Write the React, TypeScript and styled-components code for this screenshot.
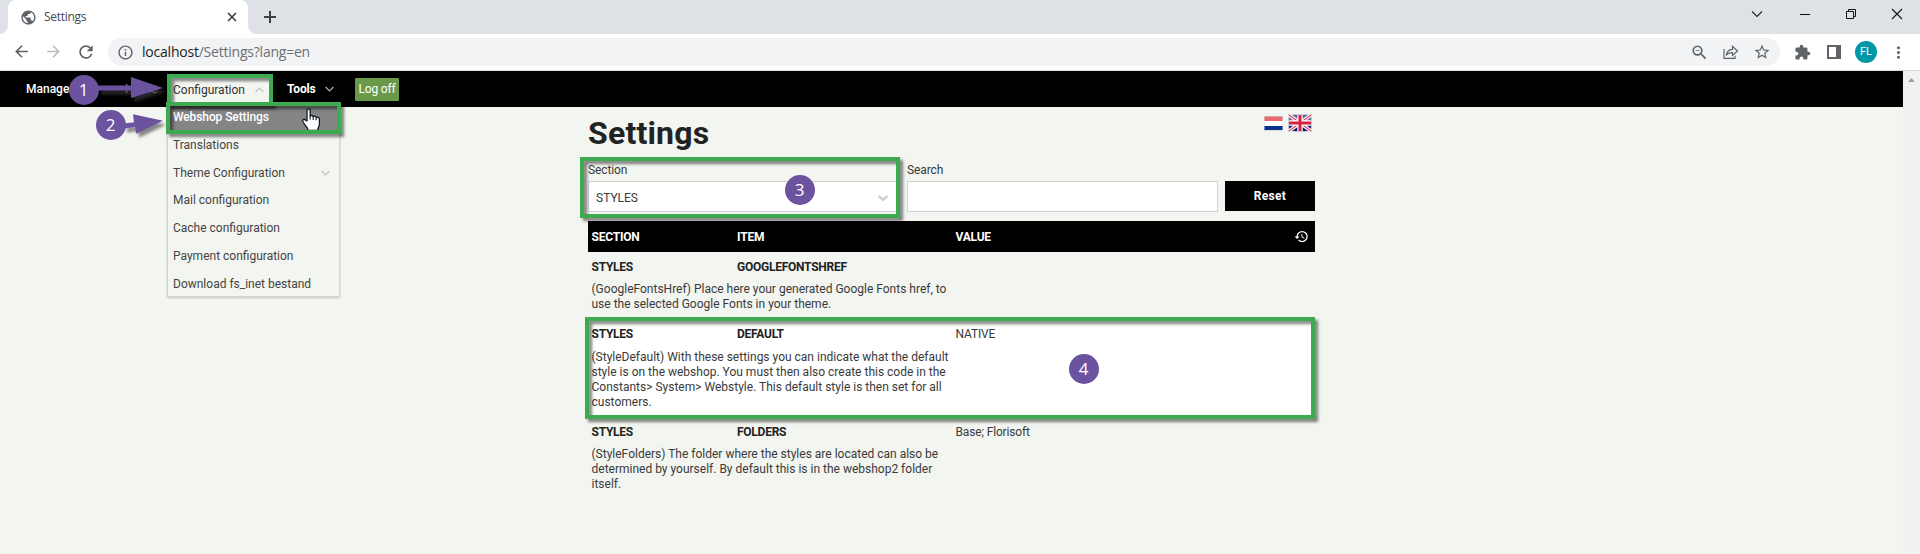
import React from 'react';
import styled, { createGlobalStyle } from 'styled-components';
import {
  MdArrowBack, MdArrowForward, MdRefresh, MdInfoOutline, MdOutlineZoomOut,
  MdStarBorder, MdExtension, MdMoreVert, MdPublic, MdHistory,
} from 'react-icons/md';

const Global = createGlobalStyle`
  * { box-sizing: border-box; }
  body { margin: 0; background: #f3f5f0; overflow: hidden; }
  svg { display: block; flex: none; }
`;

const Window = styled.div`
  position: relative;
  width: 1920px;
  height: 554px;
  display: flex;
  flex-direction: column;
  overflow: hidden;
  font-family: Roboto, 'Liberation Sans', sans-serif;
  font-size: 12px;
  color: #3a3a3a;
`;

/* ---------- browser chrome ---------- */
const TabStrip = styled.div`
  height: 34px;
  flex: none;
  display: flex;
  background: #dee1e6;
`;
const TabEdge = styled.div<{ $side: 'left' | 'right' }>`
  width: 8px;
  height: 34px;
  background: radial-gradient(circle at ${p => (p.$side === 'left' ? '0' : '8px')} 26px, #dee1e6 7.5px, #fff 8px);
  clip-path: inset(26px 0 0 0);
`;
const Tab = styled.div`
  width: 240px;
  display: flex;
  align-items: center;
  padding: 0 10px 0 12px;
  background: #fff;
  border-radius: 8px 8px 0 0;
  color: #5f6368;
`;
const TabTitle = styled.span`
  flex: 1;
  margin-left: 7px;
  padding-bottom: 1px;
  font-family: 'Open Sans', sans-serif;
  font-size: 12px;
  letter-spacing: -0.3px;
  color: #45494d;
`;
const NewTab = styled.div`
  padding: 11px 0 0 8px;
`;
const WindowButtons = styled.div`
  margin-left: auto;
  display: flex;
  align-items: center;
  gap: 30px;
  padding: 0 15px 6px 0;
`;
const Toolbar = styled.div`
  height: 37px;
  flex: none;
  display: flex;
  align-items: center;
  padding-left: 12px;
  background: #fff;
  border-bottom: 1px solid #d9dcda;
  color: #5f6368;
`;
const NavButtons = styled.div`
  display: flex;
  gap: 13px;
  width: 96px;
`;
const AddressBar = styled.div`
  width: 1672px;
  height: 28px;
  display: flex;
  align-items: center;
  padding: 0 9px 0 9px;
  border-radius: 14px;
  background: #f1f3f4;
`;
const Url = styled.span`
  flex: 1;
  margin-left: 8px;
  font-family: 'Open Sans', sans-serif;
  font-size: 14px;
  letter-spacing: -0.22px;
  line-height: 20px;
  color: #6b6f74;
`;
const Host = styled.span`
  color: #202124;
`;
const AddressIcons = styled.div`
  display: flex;
  align-items: center;
  gap: 14px;
`;
const Extensions = styled.div`
  display: flex;
  align-items: center;
  margin-left: 14px;
`;
const SidePanelIcon = styled.div`
  width: 14px;
  height: 14px;
  margin: 0 14px 0 16px;
  border: 2px solid #5f6368;
  border-right-width: 5px;
`;
const Avatar = styled.div`
  width: 22px;
  height: 22px;
  border-radius: 50%;
  background: #0097a7;
  color: #fff;
  font-size: 11px;
  line-height: 22px;
  text-align: center;
  margin-right: 12px;
`;

/* ---------- page ---------- */
const Viewport = styled.div`
  flex: 1;
  display: flex;
  min-height: 0;
`;
const Page = styled.div`
  width: 1903px;
`;
const ScrollTrack = styled.div`
  width: 17px;
  background: #f1f1f1;
  padding: 7px 0 0 5px;
`;
const NavBar = styled.nav`
  height: 36px;
  display: flex;
  align-items: center;
  padding-left: 26px;
  background: #000;
  color: #fff;
`;
const NavLink = styled.div<{ $w: number; $dim?: boolean }>`
  width: ${p => p.$w}px;
  font-weight: ${p => (p.$dim ? 400 : 500)};
  color: ${p => (p.$dim ? '#999' : '#fff')};
`;
const OpenMenu = styled.div`
  position: relative;
  align-self: flex-end;
  width: 106px;
  height: 33px;
  display: flex;
  align-items: center;
  justify-content: space-between;
  padding: 0 9px 2px 6px;
  background: #f3f5f0;
  color: #333;
`;
const ToolsMenu = styled.div`
  width: 82px;
  display: flex;
  align-items: center;
  gap: 9px;
  padding-left: 14px;
  font-weight: 700;
  letter-spacing: -0.15px;
`;
const LogOff = styled.button`
  width: 44px;
  height: 23px;
  padding: 0;
  border: 0;
  border-radius: 1px;
  background: #6a994a;
  color: #fff;
  font: 12px Roboto, sans-serif;
  letter-spacing: -0.2px;
`;
const Dropdown = styled.div`
  position: absolute;
  left: 0;
  top: 31px;
  width: 173px;
  height: 192px;
  background: #f3f5f0;
  border: 1px solid #d2d4d0;
  border-top: 0;
  box-shadow: 0 1px 2px rgba(0, 0, 0, 0.2);
`;
const MenuItem = styled.div<{ $active?: boolean }>`
  height: ${p => (p.$active ? 26 : 27.8)}px;
  display: flex;
  align-items: center;
  justify-content: space-between;
  padding: 0 9px ${p => (p.$active ? 3 : 0)}px 5px;
  color: ${p => (p.$active ? '#fff' : '#444')};
  background: ${p => (p.$active ? '#858585' : 'transparent')};
  font-weight: ${p => (p.$active ? 500 : 400)};
  letter-spacing: ${p => (p.$active ? -0.1 : 0)}px;
`;

const Content = styled.main`
  width: 727px;
  margin-left: 588px;
`;
const TitleRow = styled.div`
  height: 56px;
  display: flex;
  justify-content: space-between;
`;
const Title = styled.h1`
  margin: 8px 0 0;
  font-size: 32px;
  line-height: 37px;
  letter-spacing: 0.2px;
  color: #222;
`;
const Flags = styled.div`
  height: 32px;
  display: flex;
  align-items: center;
  gap: 5px;
  padding-right: 3px;
`;
const Filters = styled.div`
  display: flex;
  align-items: flex-end;
  height: 49px;
`;
const Field = styled.label<{ $w: number; $gap: number }>`
  width: ${p => p.$w}px;
  margin-right: ${p => p.$gap}px;
`;
const Label = styled.span`
  display: block;
  line-height: 15px;
  height: 18px;
  letter-spacing: -0.1px;
`;
const Box = styled.div`
  height: 31px;
  display: flex;
  align-items: center;
  justify-content: space-between;
  padding: 2px 11px 0 7px;
  background: #fff;
  border: 1px solid #d0d0d0;
`;
const Reset = styled.button`
  width: 90px;
  height: 30px;
  margin-bottom: 1px;
  border: 0;
  background: #000;
  color: #fff;
  font: 700 12px Roboto, sans-serif;
  letter-spacing: 0.3px;
`;
const Table = styled.div`
  margin-top: 9px;
`;
const HeadRow = styled.div`
  height: 31px;
  display: grid;
  grid-template-columns: 145.5px 218.5px 1fr auto;
  align-items: center;
  padding: 0 6px 0 3.5px;
  background: #000;
  color: #fff;
  font-weight: 700;
  letter-spacing: -0.2px;
`;
const Row = styled.div<{ $highlight?: boolean }>`
  display: grid;
  grid-template-columns: 145.5px 218.5px 1fr;
  row-gap: ${p => (p.$highlight ? 8 : 7)}px;
  padding: 8px 0 7px 3.5px;
  line-height: 15px;
  background: ${p => (p.$highlight ? '#fff' : 'transparent')};
`;
const Key = styled.div`
  font-weight: 700;
  color: #222;
  letter-spacing: -0.25px;
`;
const Value = styled.div`
  letter-spacing: -0.15px;
`;
const Description = styled.div`
  grid-column: 1 / 3;
  white-space: pre-line;
`;

/* ---------- callouts drawn over the page ---------- */
const Frame = styled.div<{ $x: number; $y: number; $w: number; $h: number }>`
  position: absolute;
  left: ${p => p.$x}px;
  top: ${p => p.$y}px;
  width: ${p => p.$w}px;
  height: ${p => p.$h}px;
  border: 4px solid #3cab50;
  filter: drop-shadow(3px 3px 1.5px rgba(0, 0, 0, 0.5));
`;
const Badge = styled.div<{ $x: number; $y: number }>`
  position: absolute;
  left: ${p => p.$x - 15}px;
  top: ${p => p.$y - 15}px;
  width: 30px;
  height: 30px;
  border-radius: 50%;
  background: #6c539f;
  color: #fff;
  font: 17px/29px 'Open Sans', sans-serif;
  text-align: center;
`;
const Arrows = styled.svg`
  position: absolute;
  left: 90px;
  top: 70px;
  filter: drop-shadow(3px 4px 1.5px rgba(60, 60, 60, 0.6));
`;
const Pointer = styled.svg`
  position: absolute;
  left: 301px;
  top: 108px;
`;

const Chevron = ({ up, c = '#aaa', w = 1.3, s = 9 }: { up?: boolean; c?: string; w?: number; s?: number }) => (
  <svg width={s} height={6} viewBox="0 0 9 6" fill="none" stroke={c} strokeWidth={w} preserveAspectRatio="none">
    <path d={up ? 'M.6 5 4.5 1.1 8.4 5' : 'M.6 1 4.5 4.9 8.4 1'} />
  </svg>
);

const DutchFlag = () => (
  <svg width="19" height="15" viewBox="0 0 19 15">
    <rect width="19" height="15" fill="#d9dbe0" />
    <path fill="#e76a70" d="M.5.5h18v4.5H.5z" />
    <path fill="#fff" d="M.5 5h18v5H.5z" />
    <path fill="#08308c" d="M.5 10h18v4H.5z" />
  </svg>
);
const BritishFlag = () => (
  <svg width="24" height="18" viewBox="0 0 24 18">
    <rect width="24" height="18" fill="#c9cad6" />
    <path fill="#5c609f" d="M1 1h22v8H1z" />
    <path fill="#0b1672" d="M1 9h22v8H1z" />
    <path stroke="#fff" strokeWidth="3.6" d="m1 1 22 16M23 1 1 17" />
    <path stroke="#e0435a" strokeWidth="1.3" d="m1 1 22 16M23 1 1 17" />
    <path stroke="#fff" strokeWidth="5.4" d="M12 1v16M1 9h22" />
    <path stroke="#d4213d" strokeWidth="3" d="M12 1v16M1 9h22" />
  </svg>
);

const menu = ['Translations', 'Theme Configuration', 'Mail configuration', 'Cache configuration', 'Payment configuration', 'Download fs_inet bestand'];

const rows = [
  { item: 'GOOGLEFONTSHREF', value: '', text: '(GoogleFontsHref) Place here your generated Google Fonts href, to\nuse the selected Google Fonts in your theme.' },
  { item: 'DEFAULT', value: 'NATIVE', highlight: true, text: '(StyleDefault) With these settings you can indicate what the default\nstyle is on the webshop. You must then also create this code in the\nConstants> System> Webstyle. This default style is then set for all\ncustomers.' },
  { item: 'FOLDERS', value: 'Base; Florisoft', text: '(StyleFolders) The folder where the styles are located can also be\ndetermined by yourself. By default this is in the webshop2 folder\nitself.' },
];

export default function App() {
  return (
    <Window>
      <Global />
      <TabStrip>
        <TabEdge $side="left" />
        <Tab>
          <MdPublic size={17} />
          <TabTitle>Settings</TabTitle>
          <svg width="12" height="12" viewBox="0 0 12 12" stroke="#3c4043" strokeWidth="1.7"><path d="m2 2 8 8M10 2l-8 8" /></svg>
        </Tab>
        <TabEdge $side="right" />
        <NewTab>
          <svg width="12" height="12" viewBox="0 0 12 12" stroke="#3c4043" strokeWidth="2"><path d="M6 0v12M0 6h12" /></svg>
        </NewTab>
        <WindowButtons>
          <svg width="12" height="12" viewBox="0 0 12 12" fill="none" stroke="#222" strokeWidth="1.1"><path d="m1 3.5 5 5 5-5" /></svg>
          <svg width="20" height="12" viewBox="0 0 20 12" stroke="#111"><path d="M7 6.500h10" /></svg>
          <svg width="16" height="12" viewBox="0 0 16 12" fill="none" stroke="#111"><path d="M3.500 3.500h7v7h-7zM5.500 3.500v-2h7v7h-2" /></svg>
          <svg width="16" height="12" viewBox="0 0 16 12" stroke="#111" strokeWidth="1.1"><path d="m3 1 10 10M13 1 3 11" /></svg>
        </WindowButtons>
      </TabStrip>

      <Toolbar>
        <NavButtons>
          <MdArrowBack size={19} />
          <MdArrowForward size={19} color="#b9bbbd" />
          <MdRefresh size={20} />
        </NavButtons>
        <AddressBar>
          <MdInfoOutline size={17} />
          <Url><Host>localhost</Host>/Settings?lang=en</Url>
          <AddressIcons>
            <MdOutlineZoomOut size={19} />
            <svg width="16" height="14" viewBox="0 0 16 14" fill="none" stroke="#5f6368" strokeWidth="1.2">
              <path d="M1 4v9.300h11v-2.500M3.500 9.800c.3-3.500 2.500-5.300 6-5.500V1.300l5 4.700-5 4.500V7.600c-2.500 0-4.500.6-6 2.200z" />
            </svg>
            <MdStarBorder size={18} />
          </AddressIcons>
        </AddressBar>
        <Extensions>
          <MdExtension size={17} />
          <SidePanelIcon />
          <Avatar>FL</Avatar>
          <MdMoreVert size={19} />
        </Extensions>
      </Toolbar>

      <Viewport>
        <Page>
          <NavBar>
            <NavLink $w={99}>Manage</NavLink>
            <NavLink $w={42} $dim>Home</NavLink>
            <OpenMenu>
              Configuration
              <Chevron up c="#c3c5c1" />
              <Dropdown>
                <MenuItem $active>Webshop Settings</MenuItem>
                {menu.map(m => (
                  <MenuItem key={m}>{m}{m.startsWith('Theme') && <Chevron c="#c3c5c1" />}</MenuItem>
                ))}
              </Dropdown>
            </OpenMenu>
            <ToolsMenu>Tools<Chevron /></ToolsMenu>
            <LogOff>Log off</LogOff>
          </NavBar>

          <Content>
            <TitleRow>
              <Title>Settings</Title>
              <Flags><DutchFlag /><BritishFlag /></Flags>
            </TitleRow>
            <Filters>
              <Field $w={312} $gap={7}>
                <Label>Section</Label>
                <Box>STYLES<Chevron c="#ccc" w={2.2} s={10} /></Box>
              </Field>
              <Field $w={311} $gap={7}>
                <Label>Search</Label>
                <Box />
              </Field>
              <Reset>Reset</Reset>
            </Filters>
            <Table>
              <HeadRow>
                <span>SECTION</span><span>ITEM</span><span>VALUE</span><MdHistory size={15} />
              </HeadRow>
              {rows.map(r => (
                <Row key={r.item} $highlight={r.highlight}>
                  <Key>STYLES</Key><Key>{r.item}</Key><Value>{r.value}</Value>
                  <Description>{r.text}</Description>
                </Row>
              ))}
            </Table>
          </Content>
        </Page>
        <ScrollTrack>
          <svg width="7" height="4" viewBox="0 0 7 4" fill="#a0a0a0"><path d="M3.500 0 7 4H0z" /></svg>
        </ScrollTrack>
      </Viewport>

      <Frame $x={167} $y={74} $w={106} $h={32} />
      <Frame $x={580} $y={157} $w={320} $h={61} />
      <Frame $x={585} $y={317} $w={730} $h={102} />
      <Pointer width="20" height="23" viewBox="0 0 20 23">
        <path fill="#fff" stroke="#111827" strokeWidth="1.3" strokeLinejoin="round" d="M6 13V2.600c0-2.400 3.200-2.400 3.200 0V8c1-.9 2.700-.6 3 .5 1.100-.8 2.500-.3 2.900.8 1.200-.6 3.300 0 3.300 2v5c0 2.200-1.400 3-1.800 6H7.200c0-2.500-3.200-4.700-5-8-1.500-2.600.8-3.700 2.200-2.400z" />
        <path stroke="#111827" strokeWidth="1.100" d="M9.200 7v4.500M12.200 8.500v3.500M15.100 9.300v3" />
      </Pointer>
      <Frame $x={166} $y={102} $w={175} $h={32} />
      <Arrows width="80" height="75" viewBox="90 70 80 75" fill="#6c539f">
        <path d="M98 85.500h33V77l32 11-32 10v-7.500H98zM124 123.500l10-1.300-1-8 30 6.500-27 13-.8-6.600-11.200 1.400z" />
      </Arrows>
      <Badge $x={83.5} $y={89.5}>1</Badge>
      <Badge $x={110.5} $y={124.500}>2</Badge>
      <Badge $x={799.5} $y={189.500}>3</Badge>
      <Badge $x={1083.5} $y={368.500}>4</Badge>
    </Window>
  );
}
